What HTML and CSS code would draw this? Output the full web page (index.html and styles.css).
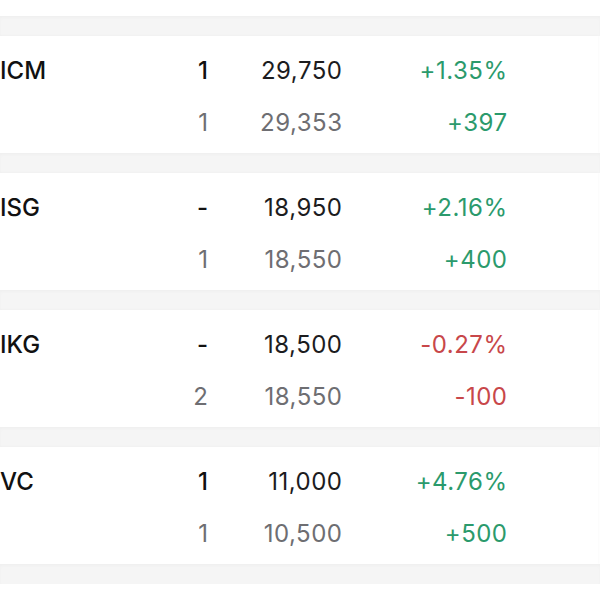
FILE: index.html
```html
<!DOCTYPE html>
<html>
<head>
<meta charset="utf-8">
<link rel="stylesheet" href="styles.css">
</head>
<body>
<div class="list">
  <div class="sep"></div>
  <div class="card">
    <div class="row main"><span class="sym">ICM</span><span class="qty">1</span><span class="price">29,750</span><span class="chg up">+1.35%</span></div>
    <div class="row sub"><span class="sym"></span><span class="qty">1</span><span class="price">29,353</span><span class="chg up">+397</span></div>
  </div>
  <div class="sep"></div>
  <div class="card">
    <div class="row main"><span class="sym">ISG</span><span class="qty">-</span><span class="price">18,950</span><span class="chg up">+2.16%</span></div>
    <div class="row sub"><span class="sym"></span><span class="qty">1</span><span class="price">18,550</span><span class="chg up">+400</span></div>
  </div>
  <div class="sep"></div>
  <div class="card">
    <div class="row main"><span class="sym">IKG</span><span class="qty">-</span><span class="price">18,500</span><span class="chg down">-0.27%</span></div>
    <div class="row sub"><span class="sym"></span><span class="qty">2</span><span class="price">18,550</span><span class="chg down">-100</span></div>
  </div>
  <div class="sep"></div>
  <div class="card">
    <div class="row main"><span class="sym">VC</span><span class="qty">1</span><span class="price">11,000</span><span class="chg up">+4.76%</span></div>
    <div class="row sub"><span class="sym"></span><span class="qty">1</span><span class="price">10,500</span><span class="chg up">+500</span></div>
  </div>
  <div class="sep"></div>
</div>
</body>
</html>
```
FILE: styles.css
```css
html, body {
  margin: 0;
  padding: 0;
  background: #ffffff;
}
body {
  font-family: Inter, "Noto Sans", sans-serif;
  font-size: 24px;
  color: #1c1c1e;
  padding-top: 16px;
}
.list {
  display: flex;
  flex-direction: column;
}
.sep {
  height: 20px;
  background: #f5f5f5;
  box-shadow: inset 0 2px 3px rgba(0,0,0,0.025);
}
.card {
  background: #ffffff;
  margin-right: 2px;
  padding: 8px 0 5px 0;
  height: 104px;
  box-shadow: 0 0 3px rgba(0,0,0,0.04);
}
.row {
  display: grid;
  grid-template-columns: 160px 48px 134px 165px;
  height: 52px;
  align-items: center;
}
.qty, .price, .chg {
  text-align: right;
}
.price, .chg {
  letter-spacing: 0.5px;
  margin-right: -0.5px;
}
.sym {
  font-weight: 500;
  color: #111;
}
.main .qty { font-weight: 500; color: #111; }
.main .price { color: #1c1c1e; }
.sub .qty, .sub .price { color: #6e6e72; }
.up { color: #2b9a6c; }
.down { color: #c8474a; }
```
